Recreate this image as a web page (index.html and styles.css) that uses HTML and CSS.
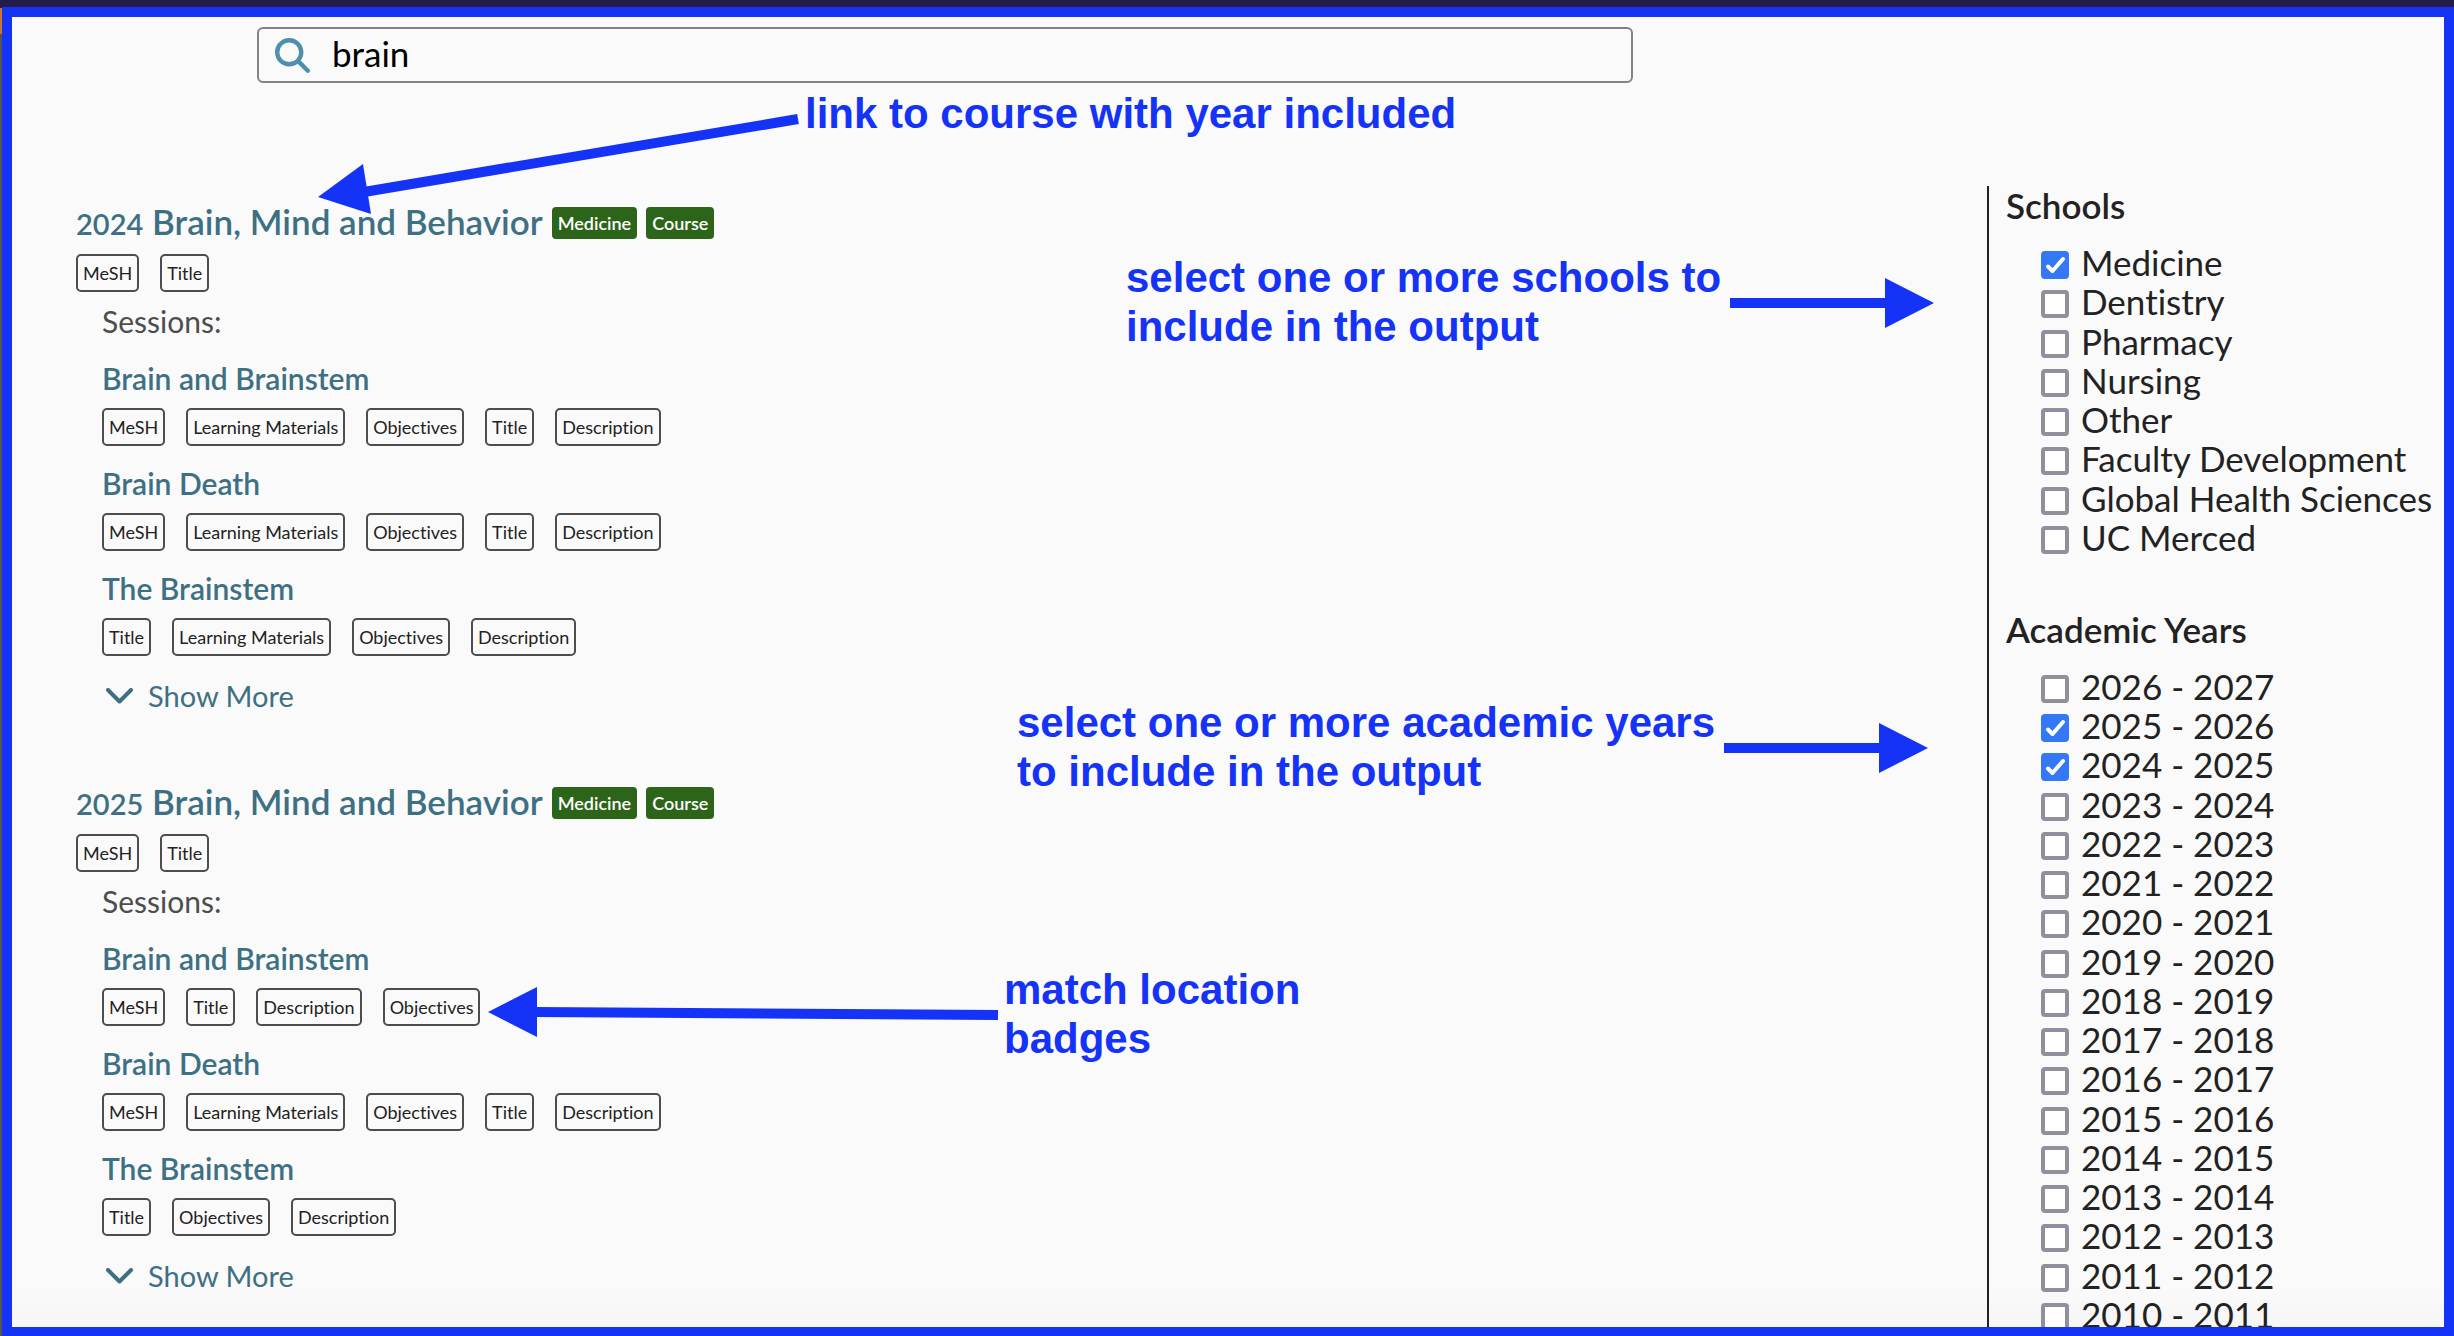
FILE: index.html
```html
<!DOCTYPE html>
<html lang="en">
<head>
<meta charset="utf-8">
<title>Course search</title>
<link rel="stylesheet" href="styles.css">
</head>
<body>
<div class="frame">
  <form class="search" role="search">
    <svg class="search-icon" viewBox="0 0 512 512" aria-hidden="true"><path d="M416 208c0 45.9-14.900 88.300-40 122.700l126.600 126.700c12.500 12.500 12.500 32.800 0 45.300s-32.800 12.500-45.300 0L330.700 376C296.300 401.200 253.900 416 208 416 93.100 416 0 322.900 0 208S93.100 0 208 0s208 93.100 208 208zM208 352a144 144 0 1 0 0-288 144 144 0 1 0 0 288z"/></svg>
    <input class="search-input" type="text" value="brain" aria-label="Search courses">
  </form>
  <div class="columns">
    <main class="results">
      <article class="course">
        <h2 class="course-title"><a href="#c2024"><span class="year">2024</span> Brain, Mind and Behavior</a> <span class="tag">Medicine</span> <span class="tag">Course</span></h2>
        <ul class="badges"><li>MeSH</li><li>Title</li></ul>
        <div class="sessions">
          <p class="sessions-label">Sessions:</p>
          <h3><a href="#s1">Brain and Brainstem</a></h3>
          <ul class="badges"><li>MeSH</li><li>Learning Materials</li><li>Objectives</li><li>Title</li><li>Description</li></ul>
          <h3><a href="#s2">Brain Death</a></h3>
          <ul class="badges"><li>MeSH</li><li>Learning Materials</li><li>Objectives</li><li>Title</li><li>Description</li></ul>
          <h3><a href="#s3">The Brainstem</a></h3>
          <ul class="badges"><li>Title</li><li>Learning Materials</li><li>Objectives</li><li>Description</li></ul>
          <button class="more" type="button"><svg viewBox="0 0 27 16" aria-hidden="true"><path d="M2 2l11.500 11.500L25 2"/></svg>Show More</button>
        </div>
      </article>
      <article class="course">
        <h2 class="course-title"><a href="#c2025"><span class="year">2025</span> Brain, Mind and Behavior</a> <span class="tag">Medicine</span> <span class="tag">Course</span></h2>
        <ul class="badges"><li>MeSH</li><li>Title</li></ul>
        <div class="sessions">
          <p class="sessions-label">Sessions:</p>
          <h3><a href="#s4">Brain and Brainstem</a></h3>
          <ul class="badges"><li>MeSH</li><li>Title</li><li>Description</li><li>Objectives</li></ul>
          <h3><a href="#s5">Brain Death</a></h3>
          <ul class="badges"><li>MeSH</li><li>Learning Materials</li><li>Objectives</li><li>Title</li><li>Description</li></ul>
          <h3><a href="#s6">The Brainstem</a></h3>
          <ul class="badges"><li>Title</li><li>Objectives</li><li>Description</li></ul>
          <button class="more" type="button"><svg viewBox="0 0 27 16" aria-hidden="true"><path d="M2 2l11.500 11.500L25 2"/></svg>Show More</button>
        </div>
      </article>
    </main>
    <aside class="filters">
      <fieldset>
        <legend>Schools</legend>
        <div class="options schools">
          <label><input type="checkbox" checked>Medicine</label>
          <label><input type="checkbox">Dentistry</label>
          <label><input type="checkbox">Pharmacy</label>
          <label><input type="checkbox">Nursing</label>
          <label><input type="checkbox">Other</label>
          <label><input type="checkbox">Faculty Development</label>
          <label><input type="checkbox">Global Health Sciences</label>
          <label><input type="checkbox">UC Merced</label>
        </div>
      </fieldset>
      <fieldset>
        <legend>Academic Years</legend>
        <div class="options years">
          <label><input type="checkbox">2026 - 2027</label>
          <label><input type="checkbox" checked>2025 - 2026</label>
          <label><input type="checkbox" checked>2024 - 2025</label>
          <label><input type="checkbox">2023 - 2024</label>
          <label><input type="checkbox">2022 - 2023</label>
          <label><input type="checkbox">2021 - 2022</label>
          <label><input type="checkbox">2020 - 2021</label>
          <label><input type="checkbox">2019 - 2020</label>
          <label><input type="checkbox">2018 - 2019</label>
          <label><input type="checkbox">2017 - 2018</label>
          <label><input type="checkbox">2016 - 2017</label>
          <label><input type="checkbox">2015 - 2016</label>
          <label><input type="checkbox">2014 - 2015</label>
          <label><input type="checkbox">2013 - 2014</label>
          <label><input type="checkbox">2012 - 2013</label>
          <label><input type="checkbox">2011 - 2012</label>
          <label><input type="checkbox">2010 - 2011</label>
        </div>
      </fieldset>
    </aside>
  </div>
  <!-- callouts drawn over the page -->
  <div class="note note-link">link to course with year included</div>
  <svg class="arrow arrow-link" viewBox="0 0 482 102" aria-hidden="true"><path d="M480 6L46 79" stroke-width="10"/><polygon points="0,84 45,51 53,101"/></svg>
  <div class="note note-schools">select one or more schools to<br>include in the output</div>
  <svg class="arrow arrow-schools" viewBox="0 0 204 50" aria-hidden="true"><path d="M0 25H157" stroke-width="10"/><polygon points="204,25 155,0 155,50"/></svg>
  <div class="note note-years">select one or more academic years<br>to include in the output</div>
  <svg class="arrow arrow-years" viewBox="0 0 204 50" aria-hidden="true"><path d="M0 25H157" stroke-width="10"/><polygon points="204,25 155,0 155,50"/></svg>
  <div class="note note-badges">match location<br>badges</div>
  <svg class="arrow arrow-badges" viewBox="0 0 510 50" aria-hidden="true"><path d="M510 28L47 25" stroke-width="10"/><polygon points="0,25 49,0 49,50"/></svg>
</div>
</body>
</html>
```
FILE: styles.css
```css
* { box-sizing: border-box; }
body {
  margin: 0;
  padding: 7px 0 0 2px;
  height: 100vh;
  overflow: hidden;
  background:
    linear-gradient(#261c48, #261c48) 0 0 / 100% 8px no-repeat,
    linear-gradient(#c8762a, #c8762a) 0 8px / 2px 26px no-repeat,
    #555;
  color: #222;
  font-family: Lato, "Open Sans", sans-serif;
  font-size: 35px;
  font-variant-ligatures: none;
}
h2, h3, p, ul, fieldset { margin: 0; padding: 0; border: 0; font-weight: 600; }
ul { list-style: none; }
a { color: #3e7084; text-decoration: none; }

.frame {
  position: relative;
  height: 100%;
  overflow: hidden;
  border: 10px solid #1433f7;
  border-bottom-width: 9px;
  background: linear-gradient(#fafafa calc(100% - 40px), #f6f6f6);
  display: flex;
  flex-direction: column;
}
.search {
  flex: none;
  display: flex;
  align-items: center;
  gap: 22px;
  width: 1376px;
  max-width: 80%;
  height: 56px;
  margin: 10px 0 0 245px;
  padding: 0 16px;
  border: 2px solid #838383;
  border-radius: 6px;
}
.search-icon { flex: none; width: 35px; height: 35px; fill: #4f8fac; }
.search-input {
  flex: 1;
  padding: 0 0 4px;
  border: 0;
  outline: 0;
  background: none;
  color: #000;
  font: inherit;
}

.columns { flex: none; display: flex; justify-content: space-between; margin-top: 103px; }
.results { padding: 16px 0 0 64px; }
.course { margin-bottom: 69px; }
.course-title {
  display: flex;
  align-items: center;
  gap: 9px;
  height: 42px;
  font-size: 35px;
  line-height: 42px;
}
.course-title a { padding-bottom: 2px; }
.year { font-size: 29px; }
.tag {
  height: 32px;
  padding: 0 6px;
  border-radius: 4px;
  background: #2c6519;
  color: #fff;
  font-size: 18px;
  line-height: 32px;
}
.badges { display: flex; gap: 21px; }
.badges li {
  height: 38px;
  padding: 0 5px;
  border: 2px solid #4d4d4d;
  border-radius: 5px;
  font-size: 18px;
  font-weight: 400;
  line-height: 34px;
}
.course > .badges { margin-top: 10px; }
.sessions { padding-left: 26px; font-size: 29px; line-height: 34px; }
.sessions-label { margin: 12px 0 0; color: #4d4d4d; font-size: 30px; font-weight: 400; }
h3 { margin: 23px 0 13px; font-size: 30px; line-height: 34px; }
.badges + h3 { margin-top: 20px; }
.more {
  display: flex;
  align-items: center;
  gap: 15px;
  margin-top: 23px;
  padding: 0 0 0 4px;
  border: 0;
  background: none;
  color: #3e7084;
  font: inherit;
}
.more svg { width: 27px; height: 16px; fill: none; stroke: currentColor; stroke-width: 4; stroke-linecap: round; stroke-linejoin: round; }

.filters { flex: none; width: 457px; padding-left: 17px; border-left: 2px solid #222; white-space: nowrap; }
legend { padding: 0; font-weight: 600; line-height: 38px; }
.options { display: grid; grid-auto-rows: 1fr; padding-left: 35px; margin-top: 21px; }
.schools { height: 314px; margin-bottom: 51px; }
.years { height: 667px; }
.options label { display: flex; align-items: flex-start; gap: 12px; font-weight: 400; line-height: 35px; }
.options input {
  appearance: none;
  width: 28px;
  height: 28px;
  margin: 6px 0 0;
  border: 4px solid #8f8f9d;
  border-radius: 4px;
  background: #fff;
}
.options input:checked {
  border-color: #3478f6;
  background: #3478f6 url("data:image/svg+xml,%3Csvg xmlns='http://www.w3.org/2000/svg' viewBox='0 0 28 28'%3E%3Cpath d='M7 15.500l4.500 4.500L22 8' fill='none' stroke='white' stroke-width='4' stroke-linecap='round' stroke-linejoin='round'/%3E%3C/svg%3E") border-box center / 28px no-repeat;
}

.note {
  position: absolute;
  color: #1433f7;
  font: bold 42px/49px "Liberation Sans", Arial, sans-serif;
  white-space: nowrap;
}
.arrow { position: absolute; overflow: visible; fill: #1433f7; stroke: none; }
.arrow path { stroke: #1433f7; }
.note-link { left: 793px; top: 72px; }
.arrow-link { left: 306px; top: 96px; width: 482px; height: 102px; }
.note-schools { left: 1114px; top: 236px; }
.arrow-schools { left: 1718px; top: 261px; width: 204px; height: 50px; }
.note-years { left: 1005px; top: 681px; }
.arrow-years { left: 1712px; top: 706px; width: 204px; height: 50px; }
.note-badges { left: 992px; top: 948px; }
.arrow-badges { left: 476px; top: 970px; width: 510px; height: 50px; }
```
